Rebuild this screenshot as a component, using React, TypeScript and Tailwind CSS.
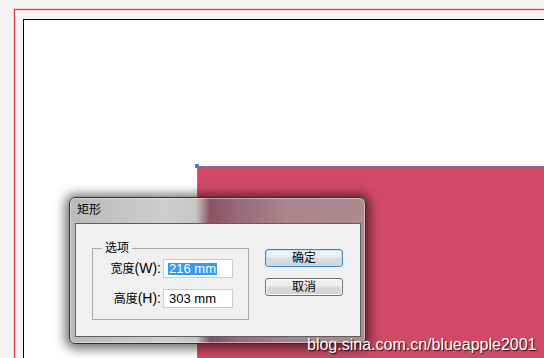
// InDesign 页面 + "矩形" 尺寸对话框（Win7 Aero 风格）

const frameBg =
  "bg-[linear-gradient(90deg,#bababa_0px,#cdcdcd_95px,#c6c6c6_126px,#8a5160_140px,#976775_165px,#a9848c_215px,#ad8b91_100%)]";

function Field({ label, hint, value, selected }: { label: string; hint: string; value: string; selected?: boolean }) {
  return (
    <div className="flex items-center justify-end gap-[2px]">
      <span className="text-[14px] leading-[16px] text-black">
        <span className="text-[12px]">{label}</span>({hint}):
      </span>
      <div className="flex h-[19px] w-[70px] items-center border border-[#c5ced8] bg-white pl-[4px] text-[13px] text-black">
        {selected ? (
          <span className="bg-[#3399ff] px-px leading-[12px] text-white">{value}</span>
        ) : (
          <span className="pl-px leading-[12px]">{value}</span>
        )}
      </div>
    </div>
  );
}

function WinButton({ children, primary }: { children: string; primary?: boolean }) {
  return (
    <button
      type="button"
      className={`flex h-[18px] w-[78px] items-center justify-center rounded-[3px] border text-[12px] leading-none text-black ${
        primary
          ? "border-[#3c86b8] bg-[linear-gradient(#f3f6f8,#e8edf0_45%,#d9e0e5_50%,#ccd5db)] shadow-[inset_0_0_0_1px_#bfe3f5]"
          : "border-[#707070] bg-[linear-gradient(#f2f2f2,#ebebeb_45%,#dddddd_50%,#cfcfcf)] shadow-[inset_0_0_0_1px_#fbfbfb]"
      }`}
    >
      {children}
    </button>
  );
}

export default function App() {
  return (
    <div className="relative h-[358px] w-[544px] overflow-hidden bg-[#f4f4f4] [font-family:'Liberation_Sans','Noto_Sans_CJK_SC',sans-serif]">
      {/* 粘贴板 → 出血线 → 页面 → 选中的矩形 */}
      <div className="h-full pl-[14px] pt-[9px]">
        <div className="h-full border-l border-t border-[#df3a44] pl-[8px] pt-[9px] shadow-[inset_1px_1px_0_#fbd4d6,-1px_-1px_0_#fbd4d6]">
          <div className="h-full border-l border-t border-black bg-white pl-[173px] pt-[146px]">
            <div className="relative h-full border-l border-t border-l-[#6a80d6] border-t-[#8a6db4] bg-[#d04a67]">
              <span className="absolute -left-[3px] -top-[3px] h-[4px] w-[4px] bg-[#4f7fd8]" />
            </div>
          </div>
        </div>
      </div>

      {/* 对话框 */}
      <div
        className={`absolute left-[69px] top-[197px] flex h-[147px] w-[297px] flex-col rounded-[6px] border border-[#2e2e2e] ${frameBg} shadow-[inset_0_0_0_1px_rgba(255,255,255,0.45),0_1px_11px_4px_rgba(0,0,0,0.55)]`}
      >
        <div className="flex h-[25px] items-center pb-[1px] pl-[7px] text-[12px] text-black">矩形</div>
        <div className="ml-[5px] mr-[4px] flex h-[114px] border border-[#5e5e5e] bg-[#f0f0f0] pl-[16px] pt-[24px]">
          <div className="relative flex h-[72px] w-[157px] flex-col gap-[11px] border border-[#a9a9a9] pr-[15px] pt-[10px]">
            <span className="absolute -top-[9px] left-[9px] bg-[#f0f0f0] px-[3px] text-[12px] leading-[16px] text-black">
              选项
            </span>
            <Field label="宽度" hint="W" value="216 mm" selected />
            <Field label="高度" hint="H" value="303 mm" />
          </div>
          <div className="ml-[16px] mt-[1px] flex flex-col gap-[11px]">
            <WinButton primary>确定</WinButton>
            <WinButton>取消</WinButton>
          </div>
        </div>
      </div>

      {/* 水印 */}
      <div className="absolute left-[307px] top-[336px] text-[16px] leading-[18px] text-white [text-shadow:1px_1px_1px_rgba(0,0,0,0.85)]">
        blog.sina.com.cn/blueapple2001
      </div>
    </div>
  );
}
